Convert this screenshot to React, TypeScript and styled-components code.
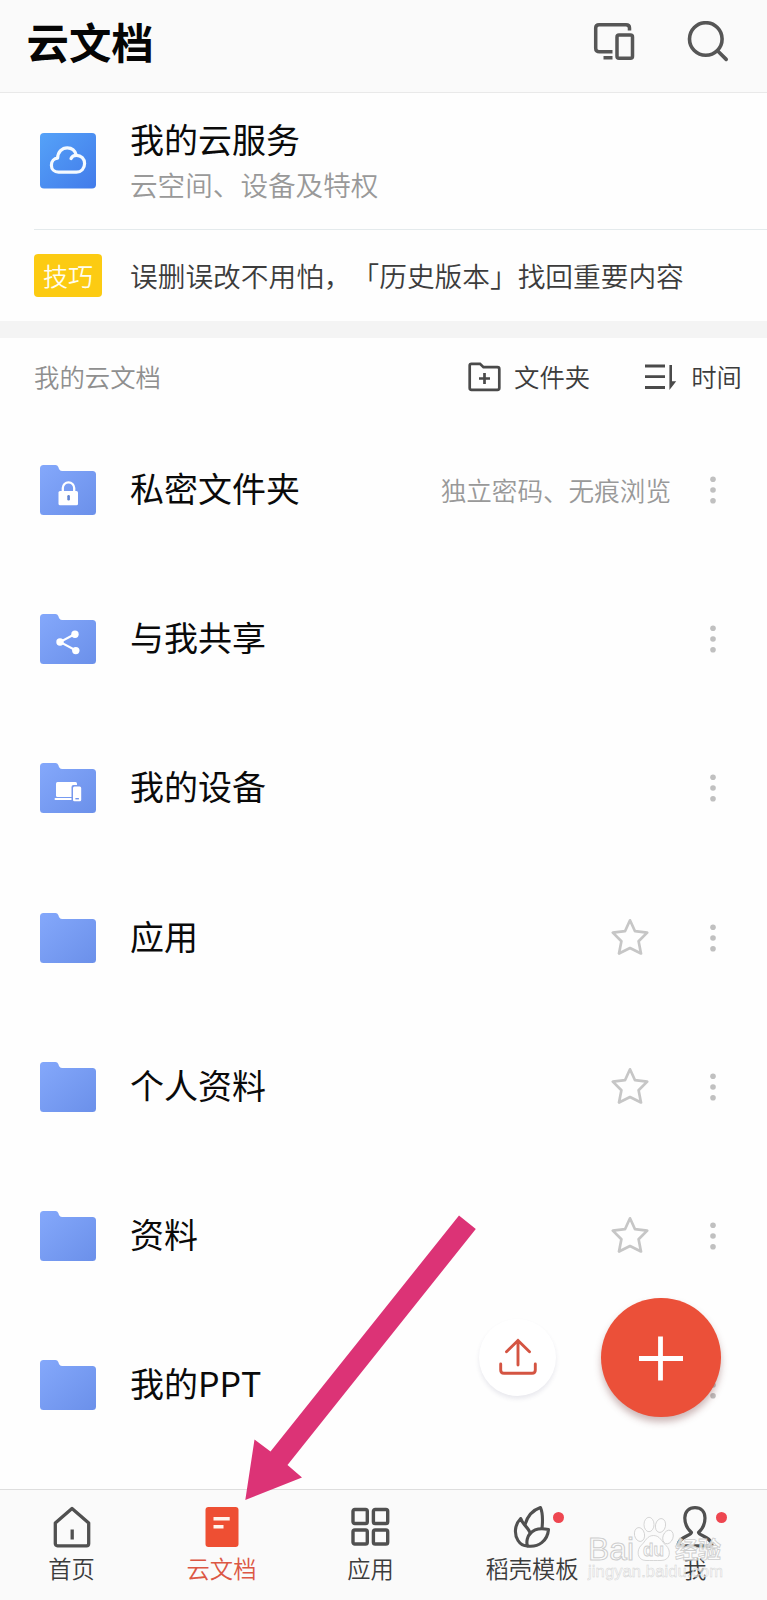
import React from "react";
import styled, { createGlobalStyle } from "styled-components";

const GlobalStyle = createGlobalStyle`
  * { box-sizing: border-box; }
  body {
    margin: 0;
    background: #fefefe;
    font-family: "Noto Sans CJK SC", "Noto Sans", sans-serif;
    text-spacing-trim: space-all;
    font-kerning: none;
  }
  svg { display: block; flex: none; }
`;

const Screen = styled.div`
  position: relative;
  width: 767px;
  height: 1600px;
  overflow: hidden;
  display: flex;
  flex-direction: column;
  background: #fefefe;
`;

const Header = styled.header`
  flex: none;
  height: 93px;
  display: flex;
  align-items: flex-start;
  justify-content: space-between;
  padding: 20px 38.5px 0 26.5px;
  background: #fafafa;
  border-bottom: 1px solid #e9e9e9;
`;

const Title = styled.h1`
  margin: 0;
  font-size: 42.4px;
  line-height: 42px;
  font-weight: 700;
  color: #050505;
`;

const HeaderActions = styled.div`
  display: flex;
  gap: 52px;
  padding-top: 1px;
`;

const ServiceRow = styled.section`
  flex: none;
  height: 136px;
  display: flex;
  gap: 34px;
  padding: 40px 0 0 40px;
`;

const ServiceText = styled.div`
  display: flex;
  flex-direction: column;
  margin-top: -16px;
`;

const ItemName = styled.span`
  font-size: 34px;
  line-height: 44px;
  color: #0a0a0a;
  white-space: nowrap;
`;

const ServiceHint = styled.span`
  margin-top: 3px;
  font-size: 27.6px;
  line-height: 40px;
  font-weight: 350;
  color: #999;
  white-space: nowrap;
`;

const TipRow = styled.section`
  flex: none;
  height: 92px;
  margin-left: 34px;
  display: flex;
  align-items: center;
  gap: 28px;
  padding-bottom: 1px;
  border-top: 1px solid #e4eaec;
`;

const TipBadge = styled.span`
  width: 68px;
  height: 43px;
  border-radius: 4px;
  background: #fccb12;
  color: #fffdf0;
  font-size: 25px;
  line-height: 42px;
  font-weight: 350;
  text-align: center;
`;

const TipText = styled.span`
  font-size: 27.7px;
  line-height: 40px;
  font-weight: 350;
  color: #3c3c3c;
  white-space: nowrap;
`;

const Divider = styled.div`
  flex: none;
  height: 17px;
  background: #f4f4f4;
`;

const ListHeader = styled.div`
  flex: none;
  height: 77px;
  display: flex;
  align-items: center;
  padding: 1px 25px 0 34px;
  font-size: 25.4px;
  line-height: 36px;
  font-weight: 350;
`;

const ListTitle = styled.span`
  flex: 1;
  padding-bottom: 2px;
  color: #8f8f8f;
`;

const ListAction = styled.div<{ $gap: number; $before?: number }>`
  display: flex;
  align-items: center;
  gap: ${(p) => p.$gap}px;
  margin-left: ${(p) => p.$before ?? 0}px;
  color: #3c3c3c;
`;

const ActionLabel = styled.span`
  padding-bottom: 2px;
`;

const FileList = styled.main`
  flex: 1;
  min-height: 0;
  overflow: hidden;
`;

const FileRow = styled.div`
  height: 149.3px;
  display: flex;
  align-items: center;
  padding: 0 51px 0 40px;
`;

const FileName = styled(ItemName)`
  flex: 1;
  margin-left: 34px;
  padding-bottom: 4px;
`;

const FileNote = styled.span`
  margin-right: 39px;
  font-size: 25.6px;
  line-height: 36px;
  font-weight: 350;
  color: #999;
`;

const StarSlot = styled.span`
  margin-right: 61.5px;
  padding-bottom: 2px;
`;

const TabBar = styled.nav`
  flex: none;
  height: 111px;
  display: grid;
  grid-template-columns: 143px 157px 141px 182px 144px;
  background: #fafafa;
  border-top: 1px solid #dedede;
`;

const Tab = styled.div<{ $active?: boolean }>`
  display: flex;
  flex-direction: column;
  align-items: center;
  padding-top: 15px;
  font-size: 23.3px;
  line-height: 32px;
  font-weight: 350;
  color: ${(p) => (p.$active ? "#dc5744" : "#3c3c3c")};
`;

const TabIcon = styled.span`
  position: relative;
  height: 46px;
  margin-bottom: 1px;
`;

const Dot = styled.i`
  position: absolute;
  top: 7px;
  left: 42px;
  width: 11px;
  height: 11px;
  border-radius: 50%;
  background: #ee4650;
`;

const RoundButton = styled.button<{ $main?: boolean }>`
  position: absolute;
  left: ${(p) => (p.$main ? 601 : 479)}px;
  top: ${(p) => (p.$main ? 1297.5 : 1319)}px;
  width: ${(p) => (p.$main ? 119.5 : 77)}px;
  height: ${(p) => (p.$main ? 119.5 : 77)}px;
  padding: ${(p) => (p.$main ? "1px 0 0" : "0 0 2px")};
  border: 0;
  border-radius: 50%;
  display: flex;
  align-items: center;
  justify-content: center;
  background: ${(p) => (p.$main ? "#eb5039" : "#fff")};
  box-shadow: ${(p) =>
    p.$main ? "0 5px 7px rgba(110, 50, 50, 0.34)" : "0 3px 4px rgba(80, 80, 120, 0.12)"};
`;

const Pointer = styled.svg`
  position: absolute;
  left: 240px;
  top: 1210px;
`;

const Watermark = styled.div`
  position: absolute;
  left: 587px;
  top: 1512px;
  width: 140px;
  height: 74px;
`;

const FolderIcon = ({ kind }: { kind?: string }) => (
  <svg width="56" height="50" viewBox="0 0 56 50">
    <defs>
      <linearGradient id="folderFill" x1="0" y1="0" x2="1" y2="1">
        <stop offset="0" stopColor="#84a8fb" />
        <stop offset="1" stopColor="#6b90ea" />
      </linearGradient>
    </defs>
    <path
      d="M3.5 0H15.5Q17.5 0 18.3 2L19 4Q19.8 6 22 6H52.5Q56 6 56 9.5V46.5Q56 50 52.5 50H3.5Q0 50 0 46.5V3.5Q0 0 3.5 0Z"
      fill="url(#folderFill)"
    />
    {kind === "lock" && (
      <g>
        <path d="M22.8 27V23a5.7 5.7 0 0 1 11.4 0V27" fill="none" stroke="#fff" strokeWidth="2.3" />
        <rect x="18.5" y="26" width="19.5" height="14.3" rx="1.6" fill="#fff" />
        <rect x="27.3" y="30" width="2.6" height="5.5" rx="1.2" fill="#6285d2" />
      </g>
    )}
    {kind === "share" && (
      <g fill="#fff">
        <path d="M35 20L20 28L36 36.5" fill="none" stroke="#fff" strokeWidth="2" />
        <circle cx="35" cy="20.3" r="3.7" />
        <circle cx="20" cy="28" r="3.7" />
        <circle cx="35.8" cy="36.6" r="3.7" />
      </g>
    )}
    {kind === "device" && (
      <g>
        <rect x="16" y="19" width="21" height="15" rx="1.5" fill="#fff" />
        <rect x="14.5" y="35" width="18" height="2" rx="1" fill="#fff" />
        <rect x="31.5" y="22" width="11" height="17.5" rx="2" fill="#7698ee" />
        <rect x="33" y="23.5" width="8.2" height="14.7" rx="1.5" fill="#fff" />
        <rect x="35.4" y="35" width="3.5" height="1.4" fill="#6f93ec" />
      </g>
    )}
  </svg>
);

const MoreIcon = () => (
  <svg width="6" height="28" viewBox="0 0 6 28" fill="#c0c0c0">
    <circle cx="3" cy="3.3" r="2.8" />
    <circle cx="3" cy="14" r="2.8" />
    <circle cx="3" cy="24.7" r="2.8" />
  </svg>
);

const StarIcon = () => (
  <svg width="38" height="38" viewBox="0 0 38 38">
    <path
      d="M19 2.3L24 13.2L36.2 14.6L27.6 23.3L30 35.5L19 30L8 35.5L10.4 23.3L1.8 14.6L14 13.2Z"
      fill="none"
      stroke="#c6c6c6"
      strokeWidth="2.7"
      strokeLinejoin="round"
    />
  </svg>
);

const files = [
  { name: "私密文件夹", kind: "lock", note: "独立密码、无痕浏览" },
  { name: "与我共享", kind: "share" },
  { name: "我的设备", kind: "device" },
  { name: "应用", star: true },
  { name: "个人资料", star: true },
  { name: "资料", star: true },
  { name: "我的PPT" },
];

export default function App() {
  return (
    <Screen>
      <GlobalStyle />
      <Header>
        <Title>云文档</Title>
        <HeaderActions>
          <svg width="42" height="42" viewBox="0 0 42 42" fill="none" stroke="#565656" strokeWidth="3.5">
            <path d="M19.5 30.8H6.5Q2.7 30.8 2.7 27.5V7Q2.7 3.7 6 3.7H33Q36.5 3.7 36.5 7V9.5M10.5 36.8H19.5" />
            <rect x="24" y="14" width="15.5" height="23.3" rx="2" />
          </svg>
          <svg width="42" height="42" viewBox="0 0 42 42" fill="none" stroke="#565656" strokeWidth="3.6">
            <circle cx="18.8" cy="18" r="16.3" />
            <path d="M30.5 29.8L39.2 38.4" strokeLinecap="round" />
          </svg>
        </HeaderActions>
      </Header>

      <ServiceRow>
        <svg width="56" height="56" viewBox="0 0 56 56">
          <defs>
            <linearGradient id="cloudFill" x1="0" y1="0" x2="1" y2="1">
              <stop offset="0" stopColor="#55a2f8" />
              <stop offset="1" stopColor="#427bea" />
            </linearGradient>
          </defs>
          <rect width="56" height="55.5" rx="4" fill="url(#cloudFill)" />
          <path
            d="M31 25.6C31.8 23.4 34 22.3 36.4 22.3C41.2 22.3 44.6 26 44.6 30.6C44.6 35.5 41.2 39.2 36.5 39.2H18.5C14.4 39.2 11.4 36.2 11.4 32.2C11.4 28.2 14 25.4 17.6 25.2C17.8 19 22 14.8 27.3 14.8C31.8 14.8 35.2 17.8 36.4 22.3"
            fill="none"
            stroke="#f4faff"
            strokeWidth="3.2"
            strokeLinecap="round"
            strokeLinejoin="round"
          />
        </svg>
        <ServiceText>
          <ItemName>我的云服务</ItemName>
          <ServiceHint>云空间、设备及特权</ServiceHint>
        </ServiceText>
      </ServiceRow>

      <TipRow>
        <TipBadge>技巧</TipBadge>
        <TipText>误删误改不用怕，「历史版本」找回重要内容</TipText>
      </TipRow>

      <Divider />

      <ListHeader>
        <ListTitle>我的云文档</ListTitle>
        <ListAction $gap={13}>
          <svg width="33" height="30" viewBox="0 0 33 30" fill="none" stroke="#4a4a4a" strokeWidth="2.7">
            <path d="M3.5 1.8H12L15.5 5.2H29.5Q31.3 5.2 31.3 7V26Q31.3 27.8 29.5 27.8H3.5Q1.7 27.8 1.7 26V3.6Q1.7 1.8 3.5 1.8Z" />
            <path d="M11 16.5H22M16.5 11V22" />
          </svg>
          <ActionLabel>文件夹</ActionLabel>
        </ListAction>
        <ListAction $gap={14} $before={55}>
          <svg width="32" height="28" viewBox="0 0 32 28">
            <path d="M0 3H20M0 13.6H20M0 24.5H20" stroke="#4a4a4a" strokeWidth="2.8" />
            <path d="M24.4 2H27V18.3H31.2L26.6 24.3L24.4 27Z" fill="#4a4a4a" />
          </svg>
          <ActionLabel>时间</ActionLabel>
        </ListAction>
      </ListHeader>

      <FileList>
        {files.map((file) => (
          <FileRow key={file.name}>
            <FolderIcon kind={file.kind} />
            <FileName>{file.name}</FileName>
            {file.note && <FileNote>{file.note}</FileNote>}
            {file.star && (
              <StarSlot>
                <StarIcon />
              </StarSlot>
            )}
            <MoreIcon />
          </FileRow>
        ))}
      </FileList>

      <TabBar>
        <Tab>
          <TabIcon>
            <svg width="42" height="44" viewBox="0 0 42 44" fill="none" stroke="#505050" strokeWidth="3.3" strokeLinejoin="round">
              <path d="M21 3.4L37.7 18V38.5Q37.7 40.8 35.5 40.8H6.5Q4.3 40.8 4.3 38.5V18Z" />
              <path d="M21.2 24.5V34.5" />
            </svg>
          </TabIcon>
          首页
        </Tab>
        <Tab $active>
          <TabIcon>
            <svg width="42" height="44" viewBox="0 0 42 44">
              <rect x="4.5" y="2" width="33" height="40" rx="3" fill="#ee4f33" />
              <path d="M12.5 13.7H28.7M12.5 21.7H22.5" stroke="#fff5ed" strokeWidth="3.6" />
            </svg>
          </TabIcon>
          云文档
        </Tab>
        <Tab>
          <TabIcon>
            <svg width="42" height="44" viewBox="0 0 42 44" fill="none" stroke="#505050" strokeWidth="3.4">
              <rect x="3" y="4.5" width="14.3" height="14" rx="1.8" />
              <rect x="23.4" y="4.5" width="14.3" height="14" rx="1.8" />
              <rect x="3" y="25" width="14.3" height="14" rx="1.8" />
              <rect x="23.4" y="25" width="14.3" height="14" rx="1.8" />
            </svg>
          </TabIcon>
          应用
        </Tab>
        <Tab>
          <TabIcon>
            <svg width="42" height="44" viewBox="0 0 42 44" fill="none" stroke="#505050" strokeWidth="3.1" strokeLinejoin="round" strokeLinecap="round">
              <path d="M14 19.5C16.5 11 22 5 29.5 2.5C31 6 32 14 31 23.5" />
              <path d="M9.7 13.5C3.5 20 3 29 7 35.5C9.5 39.5 13 41 16.5 41C15 37 16.5 31 19.2 28.5C18 22.5 11.5 20 9.7 13.5Z" />
              <path d="M16.5 41C27.5 42.5 36.5 36 37.5 24.5C30.5 23 23.5 23.5 19.2 28.5" />
            </svg>
            <Dot />
          </TabIcon>
          稻壳模板
        </Tab>
        <Tab>
          <TabIcon>
            <svg width="42" height="44" viewBox="0 0 42 44" fill="none" stroke="#505050" strokeWidth="3.2" strokeLinejoin="round">
              <path d="M17.5 27.5C13 23.5 10.8 19 10.8 13C10.8 6.5 15 2.6 21 2.6C27 2.6 31 6.5 31 13C31 19 29 23.5 24.5 27.5C25 31 37.5 31.5 38 40.8H4C4.5 31.5 17 31 17.5 27.5Z" />
            </svg>
            <Dot />
          </TabIcon>
          我
        </Tab>
      </TabBar>

      <RoundButton aria-label="上传">
        <svg width="40" height="40" viewBox="0 0 40 40" fill="none" stroke="#d45442" strokeWidth="2.9" strokeLinecap="round">
          <path d="M20 28V3.5M8.5 14.7L20 3.5L31.5 14.7" />
          <path d="M2.7 27V33Q2.7 36.3 6 36.3H34Q37.3 36.3 37.3 33V27" />
        </svg>
      </RoundButton>
      <RoundButton $main aria-label="新建">
        <svg width="46" height="46" viewBox="0 0 46 46" stroke="#fff" strokeWidth="4.8">
          <path d="M1 23.5H45M22.5 1.5V45.5" />
        </svg>
      </RoundButton>

      <Pointer width="240" height="295" viewBox="240 1210 240 295">
        <path d="M459 1215.5L475.8 1229L287.5 1465L302 1477.5L245.3 1500L254.5 1439.5L270.5 1451.5Z" fill="#dc3376" />
      </Pointer>

      <Watermark>
        <svg width="140" height="74" viewBox="587 1512 140 74" fontFamily="Liberation Sans, sans-serif">
          <g fill="#fdfdfd" fillOpacity="0.8" stroke="#cdcdcd" strokeWidth="0.8" fontWeight="700">
            <text x="588" y="1560" fontSize="31" fontWeight="400" textLength="46" lengthAdjust="spacingAndGlyphs" strokeWidth="1">Bai</text>
            <ellipse cx="639.5" cy="1534.5" rx="5" ry="7" transform="rotate(-12 639.5 1534.5)" />
            <ellipse cx="649" cy="1524.5" rx="5" ry="7.2" />
            <ellipse cx="660.5" cy="1525.5" rx="5" ry="7" transform="rotate(12 660.5 1525.5)" />
            <ellipse cx="668" cy="1537" rx="5" ry="7" transform="rotate(20 668 1537)" />
            <path d="M653.5 1535.5C647 1535.5 645.5 1541.5 641.5 1545C636 1550 637 1560.5 646 1560.5C650 1560.5 657 1560.5 661 1560.5C670.5 1560.5 671.5 1550.5 666 1545.5C661.5 1541.5 660 1535.5 653.5 1535.5Z" />
            <text x="643" y="1555.5" fontSize="18" textLength="21" lengthAdjust="spacingAndGlyphs">du</text>
            <text x="675" y="1557.5" fontSize="23" fontFamily="Noto Sans CJK SC, sans-serif">经验</text>
          </g>
          <text x="588" y="1577" fontSize="16.5" textLength="135" fill="#fdfdfd" fillOpacity="0.6" stroke="#d2d2d2" strokeWidth="0.45">
            jingyan.baidu.com
          </text>
        </svg>
      </Watermark>
    </Screen>
  );
}
